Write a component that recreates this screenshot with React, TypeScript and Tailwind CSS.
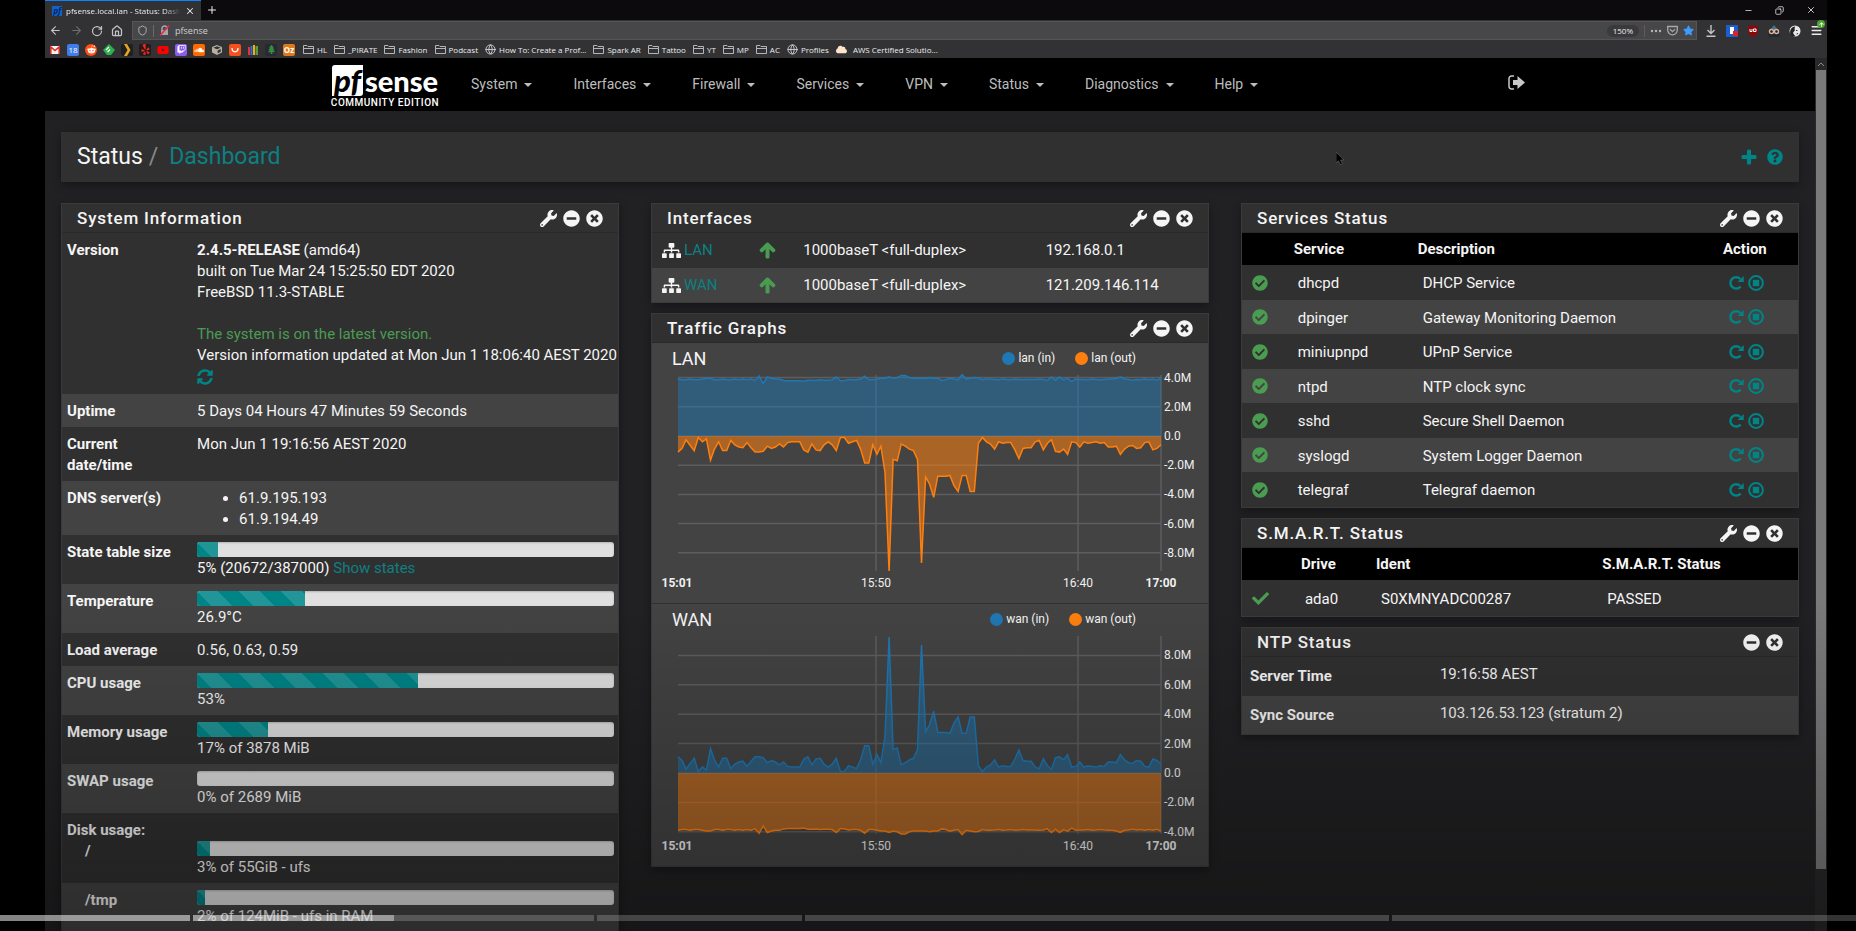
import React from "react";
import {
  FaWrench, FaMinusCircle, FaTimesCircle, FaSitemap, FaArrowUp, FaCheckCircle, FaCheck,
  FaSyncAlt, FaQuestionCircle, FaPlus, FaStar, FaGetPocket, FaRedditAlien, FaYoutube,
  FaTwitch, FaSoundcloud, FaYelp, FaTree, FaCloud, FaCube,
} from "react-icons/fa";
import { ArrowLeft, ArrowRight, RotateCw, House, Shield, Globe, Plus, X, Minus, Copy, Menu, Download } from "lucide-react";

/* ---------- browser chrome ---------- */

const favicon = "flex size-3 shrink-0 items-center justify-center rounded-[2px] text-[8px] leading-none";

const favicons: { name: string; className: string; icon: React.ReactNode }[] = [
  {
    name: "Gmail",
    className: "",
    icon: (
      <svg viewBox="0 0 12 12" className="size-3">
        <path d="M1 2h10v8H1z" fill="#f2f2f2" />
        <path d="M1.800 10V3L6 6.500 10.200 3v7" fill="none" stroke="#d93025" strokeWidth="1.600" />
      </svg>
    ),
  },
  { name: "Calendar", className: "bg-[#3f7de8] text-white", icon: <span>18</span> },
  { name: "Reddit", className: "rounded-full bg-[#ff4f14] text-white", icon: <FaRedditAlien size={9} /> },
  {
    name: "Feedly",
    className: "text-[#2bb24c]",
    icon: (
      <svg viewBox="0 0 12 12" className="size-3">
        <path d="M6 0 12 6 8 11H4L0 6Z" fill="currentColor" />
        <path d="M6 3 3 6M7 5.500 4.600 8" stroke="#fff" strokeWidth="1.200" />
      </svg>
    ),
  },
  {
    name: "Plex",
    className: "bg-[#1f2023]",
    icon: (
      <svg viewBox="0 0 12 12" className="size-3">
        <path d="M3 0h3l3.500 6L6 12H3l3.500-6Z" fill="#e9a51b" />
      </svg>
    ),
  },
  { name: "Reviews", className: "bg-[#241a1c] text-[#f0281e]", icon: <FaYelp size={11} /> },
  { name: "YouTube", className: "text-[#ff0000]", icon: <FaYoutube size={12} /> },
  { name: "Twitch", className: "bg-[#8c5cf0] text-white", icon: <FaTwitch size={9} /> },
  { name: "SoundCloud", className: "bg-[#ff6a00] text-white", icon: <FaSoundcloud size={10} /> },
  { name: "Packages", className: "text-[#b8b0a0]", icon: <FaCube size={10} /> },
  {
    name: "AliExpress",
    className: "bg-[#f4511e]",
    icon: (
      <svg viewBox="0 0 12 12" className="size-3">
        <path d="M3 4c0 5 6 5 6 0" fill="none" stroke="#fff" strokeWidth="1.300" />
      </svg>
    ),
  },
  {
    name: "eBay",
    className: "",
    icon: (
      <svg viewBox="0 0 12 12" className="size-3">
        <path d="M1 3h2v8H1z" fill="#e53238" />
        <path d="M3.500 2h2v9h-2z" fill="#2b6fe0" />
        <path d="M6 1h2v10H6z" fill="#f5af02" />
        <path d="M8.500 2h2.500v9H8.500z" fill="#5a9a3a" />
      </svg>
    ),
  },
  { name: "Forest", className: "bg-[#2b2733] text-[#2f8f3c]", icon: <FaTree size={9} /> },
  { name: "OzBargain", className: "bg-[#dd7a1c] font-bold text-white", icon: <span>Oz</span> },
];

const bookmarks: { label: string; kind: "folder" | "globe" | "cloud" }[] = [
  { label: "HL", kind: "folder" },
  { label: "_PIRATE", kind: "folder" },
  { label: "Fashion", kind: "folder" },
  { label: "Podcast", kind: "folder" },
  { label: "How To: Create a Prof...", kind: "globe" },
  { label: "Spark AR", kind: "folder" },
  { label: "Tattoo", kind: "folder" },
  { label: "YT", kind: "folder" },
  { label: "MP", kind: "folder" },
  { label: "AC", kind: "folder" },
  { label: "Profiles", kind: "globe" },
  { label: "AWS Certified Solutio...", kind: "cloud" },
];

function BookmarkIcon({ kind }: { kind: "folder" | "globe" | "cloud" }) {
  if (kind === "folder") {
    return (
      <svg viewBox="0 0 11 11" className="size-[11px] shrink-0" fill="none" stroke="#b5b5b7">
        <path d="M.5 9.500v-8h3.500l1 1h5.500v7ZM.5 4.500h10" />
      </svg>
    );
  }
  if (kind === "globe") return <Globe size={11} className="shrink-0 text-[#d0d0d2]" />;
  return <FaCloud size={11} className="mr-[3px] shrink-0 text-[#ffe3cb]" />;
}

function BrowserChrome() {
  return (
    <header className="shrink-0 font-['Open_Sans','Noto_Sans',sans-serif] text-[8px] text-[#ececee]">
      <div className="flex h-5 items-center bg-[#0c0a0d]">
        <div className="flex h-5 w-[156px] items-center gap-1 border-t border-[#0a84ff] bg-[#323234] pr-1.5 pl-[7px]">
          <span className="flex size-[10px] shrink-0 items-center justify-center bg-[#1264c0] text-[8px] leading-none font-bold text-[#0b1f6a] italic">pf</span>
          <span className="grow whitespace-nowrap [mask-image:linear-gradient(to_right,#000_85%,transparent)]">
            pfsense.local.lan - Status: Dash
          </span>
          <button aria-label="Close tab"><X size={10} strokeWidth={2.5} /></button>
        </div>
        <button aria-label="New tab" className="ml-[5px]"><Plus size={12} /></button>
        <div className="ml-auto flex items-center gap-[22px] pr-[11px]">
          <button aria-label="Minimize"><Minus size={9} /></button>
          <button aria-label="Restore"><Copy size={9} className="-scale-x-100" /></button>
          <button aria-label="Close"><X size={10} /></button>
        </div>
      </div>

      <div className="flex h-[21px] items-center bg-[#323234] pr-1 pl-1">
        <div className="flex w-[83px] shrink-0 items-center gap-2 text-[#c4c4c6]">
          <button aria-label="Back"><ArrowLeft size={13} /></button>
          <button aria-label="Forward" className="text-[#6d6d70]"><ArrowRight size={13} /></button>
          <button aria-label="Reload"><RotateCw size={12} strokeWidth={2.5} /></button>
          <button aria-label="Home"><House size={12} strokeWidth={2.5} /></button>
        </div>
        <div className="flex h-[19px] grow items-center gap-[5px] border border-[#555558] bg-[#47474a] pr-0.5 pl-1">
          <Shield size={11} className="text-[#b5b5b7]" />
          <span className="h-3 w-px bg-[#6a6a6d]" />
          <svg viewBox="0 0 11 11" className="size-[11px]">
            <path d="M3 5V3.500a2.500 2.500 0 0 1 5 0V5" fill="none" stroke="#a5a5a8" strokeWidth="1.500" />
            <path d="M2 5h7v5H2z" fill="#a5a5a8" />
            <path d="M10 .5 1 10.500" stroke="#e22850" strokeWidth="1.500" />
          </svg>
          <input aria-label="Address" defaultValue="pfsense" className="h-4 w-0 grow bg-transparent text-[9px] text-[#cfcfd1] outline-none" />
          <span className="rounded-full bg-[#3a3a3d] px-1.5 text-[8px] leading-[12px]">150%</span>
          <span className="h-3 w-px bg-[#5d5d60]" />
          <svg viewBox="0 0 12 4" className="h-1 w-3" fill="#b5b5b7">
            <circle cx="2" cy="2" r="1.200" /><circle cx="6" cy="2" r="1.200" /><circle cx="10" cy="2" r="1.200" />
          </svg>
          <svg viewBox="0 0 11 11" className="size-[11px]" fill="none" stroke="#a8a8ab" strokeWidth="1.300">
            <path d="M.7 1.500h9.600V5a4.800 4.800 0 0 1-9.600 0ZM3 4.200l2.500 2.400L8 4.200" />
          </svg>
          <FaStar size={11} className="text-[#3d9bff]" />
        </div>
        <div className="ml-2 flex items-center gap-[9px]">
          <button aria-label="Downloads">
            <svg viewBox="0 0 12 12" className="size-3" fill="none" stroke="#c4c4c6" strokeWidth="1.400">
              <path d="M6 0v8.500M2.500 5 6 8.500 9.500 5M1.500 11.300h9" />
            </svg>
          </button>
          <span className="flex size-3 items-center justify-end bg-[#1a5fd0]">
            <svg viewBox="0 0 12 12" className="size-3">
              <path d="M4 2h4v7H4z" fill="#fff" /><path d="M7 6h5v5H7z" fill="#e0202c" />
            </svg>
          </span>
          <svg viewBox="0 0 12 12" className="size-3">
            <path d="M6 0 11 1.500V6c0 3-2 5-5 6C3 11 1 9 1 6V1.500Z" fill="#8a0a0c" />
            <path d="M3 4v2.500h2V4M6.500 4h2.500v2.500H6.500Z" fill="none" stroke="#fff" />
          </svg>
          <svg viewBox="0 0 12 12" className="size-3">
            <path d="M2 5 6 0l4 5Z" fill="#3a7590" /><path d="M0 9h12l-1 3H1z" fill="#1c2a33" />
            <circle cx="3.500" cy="6.500" r="2" fill="#222" stroke="#e0b09a" strokeWidth="1.400" />
            <circle cx="8.500" cy="6.500" r="2" fill="#222" stroke="#e0b09a" strokeWidth="1.400" />
          </svg>
          <svg viewBox="0 0 12 12" className="size-3">
            <circle cx="6" cy="6" r="5.500" fill="#e8e8e8" />
            <path d="M1.500 10C0 5 3 1 6.500 1.500 4.500 3 7 5 5 6.500s0 3 1.500 4.500c-2 1-4 .5-5-1Z" fill="#222" />
            <path d="M7 5.500h1.500M9 8.500 7.500 9" stroke="#333" />
          </svg>
          <button aria-label="Open menu" className="relative">
            <Menu size={13} strokeWidth={2.5} />
            <span className="absolute -top-1 -right-0.5 flex size-2 items-center justify-center rounded-full bg-[#4fa62c] text-white">
              <FaArrowUp size={5} />
            </span>
          </button>
        </div>
      </div>

      <nav aria-label="Bookmarks" className="flex h-[17px] items-center gap-[6px] bg-[#323234] pl-1">
        {favicons.map((f) => (
          <a key={f.name} href="#" aria-label={f.name} className={`${favicon} ${f.className}`}>{f.icon}</a>
        ))}
        <div className="ml-0.5 flex items-center gap-[7px]">
          {bookmarks.map((b) => (
            <a key={b.label} href="#" className="flex items-center gap-[3px] whitespace-nowrap">
              <BookmarkIcon kind={b.kind} />
              {b.label}
            </a>
          ))}
        </div>
      </nav>
    </header>
  );
}

/* ---------- pfSense page ---------- */

const menu = ["System", "Interfaces", "Firewall", "Services", "VPN", "Status", "Diagnostics", "Help"];

function TopNav() {
  return (
    <nav aria-label="Main" className="flex h-[53px] items-center bg-black">
      <div className="mx-auto flex w-full max-w-[1200px] items-center">
        <a href="#" aria-label="pfSense Community Edition" className="flex w-[110px] flex-col items-center pt-1 font-['Lato',sans-serif]">
          <span className="flex items-center gap-0.5">
            <span className="flex h-[31px] w-[31px] items-center justify-center rounded-tl-[3px] rounded-br-[3px] bg-white text-[31px] leading-[31px] font-black text-black italic">pf</span>
            <span className="text-[29px] leading-[31px] font-black text-white">sense</span>
          </span>
          <span className="mt-px font-['Roboto',sans-serif] text-[10px] leading-[12px] font-medium tracking-wider whitespace-nowrap text-white">COMMUNITY EDITION</span>
        </a>
        <ul className="ml-[31px] flex items-center gap-[41px] text-[14px] text-[#bdbdbd]">
          {menu.map((m) => (
            <li key={m}>
              <button className="flex items-center gap-[7px]">
                {m}
                <svg viewBox="0 0 8 4" className="h-1 w-2"><path d="M0 0h8L4 4Z" fill="currentColor" /></svg>
              </button>
            </li>
          ))}
        </ul>
        <button aria-label="Logout" className="mr-[5px] mb-1 ml-auto text-[#c8c8c8]">
          <svg viewBox="0 0 17 15" className="h-[15px] w-[17px]">
            <path d="M6 1H3.500A2.500 2.500 0 0 0 1 3.500v8A2.500 2.500 0 0 0 3.500 14H6" fill="none" stroke="currentColor" strokeWidth="1.500" />
            <path d="M5 5h4.500V1L17 7.500 9.500 14v-4H5Z" fill="currentColor" />
          </svg>
        </button>
      </div>
    </nav>
  );
}

function Panel({ title, wrench = true, children }: { title: string; wrench?: boolean; children: React.ReactNode }) {
  return (
    <section className="border border-[#3b3a3b] bg-[#313031] shadow-[0_3px_8px_rgba(0,0,0,0.35)]">
      <div className="flex h-[29px] items-center justify-between border-b border-[#2a292a] pr-[15px] pl-[15px]">
        <h2 className="text-[17px] leading-[21px] font-medium tracking-wider">{title}</h2>
        <div className="flex items-center gap-1.5 text-[17px]">
          {wrench && <button aria-label={`Configure ${title}`}><FaWrench /></button>}
          <button aria-label={`Collapse ${title}`}><FaMinusCircle /></button>
          <button aria-label={`Close ${title}`}><FaTimesCircle /></button>
        </div>
      </div>
      {children}
    </section>
  );
}

function Meter({ value, label }: { value: number; label: string }) {
  return (
    <div role="progressbar" aria-label={label} aria-valuenow={value} className="mb-px h-[15px] overflow-hidden rounded-[3px] bg-[#e0e0e0] shadow-[inset_0_1px_2px_rgba(0,0,0,0.2)]">
      <div
        className="h-full bg-[#008587] bg-[linear-gradient(45deg,rgba(255,255,255,0.13)_25%,transparent_25%,transparent_50%,rgba(255,255,255,0.13)_50%,rgba(255,255,255,0.13)_75%,transparent_75%)] bg-[length:42px_42px]"
        style={{ width: `${value}%` }}
      />
    </div>
  );
}

function InfoRow({ label, children }: { label: React.ReactNode; children: React.ReactNode }) {
  return (
    <tr className="align-top even:bg-[#434343]">
      <th scope="row" className="w-[24.3%] pt-[7px] pb-[5px] pl-[5px] text-left font-bold">{label}</th>
      <td className="pt-[7px] pr-1 pb-[5px]">{children}</td>
    </tr>
  );
}

function SystemInformation() {
  return (
    <Panel title="System Information">
      <table className="w-full table-fixed">
        <tbody>
          <InfoRow label="Version">
            <strong>2.4.5-RELEASE</strong> (amd64)<br />
            built on Tue Mar 24 15:25:50 EDT 2020<br />
            FreeBSD 11.3-STABLE<br />
            <br />
            <span className="text-[#4a9c51]">The system is on the latest version.</span><br />
            <span className="whitespace-nowrap">Version information updated at Mon Jun 1 18:06:40 AEST 2020</span>
            <button aria-label="Refresh" className="mb-0.5 flex h-[21px] items-center text-[16px] text-[#008587]"><FaSyncAlt /></button>
          </InfoRow>
          <InfoRow label="Uptime">5 Days 04 Hours 47 Minutes 59 Seconds</InfoRow>
          <InfoRow label={<>Current<br />date/time</>}>Mon Jun 1 19:16:56 AEST 2020</InfoRow>
          <InfoRow label="DNS server(s)">
            <ul className="list-disc pl-[42px]">
              <li>61.9.195.193</li>
              <li>61.9.194.49</li>
            </ul>
          </InfoRow>
          <InfoRow label="State table size">
            <Meter value={5} label="State table size" />
            5% (20672/387000) <a href="#" className="text-[#0c8082]">Show states</a>
          </InfoRow>
          <InfoRow label="Temperature"><Meter value={26} label="Temperature" />26.9°C</InfoRow>
          <InfoRow label="Load average">0.56, 0.63, 0.59</InfoRow>
          <InfoRow label="CPU usage"><Meter value={53} label="CPU usage" />53%</InfoRow>
          <InfoRow label="Memory usage"><Meter value={17} label="Memory usage" />17% of 3878 MiB</InfoRow>
          <InfoRow label="SWAP usage"><Meter value={0} label="SWAP usage" />0% of 2689 MiB</InfoRow>
          <InfoRow label={<>Disk usage:<br /><span className="pl-[18px]">/</span></>}>
            <div className="pt-[21px]"><Meter value={3} label="Disk usage of /" />3% of 55GiB - ufs</div>
          </InfoRow>
          <InfoRow label={<span className="pl-[18px]">/tmp</span>}><Meter value={2} label="Disk usage of /tmp" />2% of 124MiB - ufs in RAM</InfoRow>
        </tbody>
      </table>
    </Panel>
  );
}

const interfaces = [
  { name: "LAN", media: "1000baseT <full-duplex>", ip: "192.168.0.1" },
  { name: "WAN", media: "1000baseT <full-duplex>", ip: "121.209.146.114" },
];

function Interfaces() {
  return (
    <Panel title="Interfaces">
      <table className="w-full table-fixed">
        <tbody>
          {interfaces.map((i) => (
            <tr key={i.name} className="odd:h-[35px] even:h-[34px] even:bg-[#434343]">
              <td className="w-[18.5%] pl-2.5">
                <span className="flex items-center gap-[3px]"><FaSitemap size={19} /><a href="#" className="text-[#0c8082]">{i.name}</a></span>
              </td>
              <td className="w-[8.7%] pl-1 text-[#4a9c51]"><FaArrowUp size={17} stroke="currentColor" strokeWidth={40} role="img" aria-label="up" /></td>
              <td className="w-[43.6%]">{i.media}</td>
              <td>{i.ip}</td>
            </tr>
          ))}
        </tbody>
      </table>
    </Panel>
  );
}

const wanTraffic = [
  1.1, 0.85, 0.25, 0.65, 1.0, 0.1, 0.4, 0.2, 1.65, 0.9, 0.4, 1, 1, 0.3, 0.6, 0.75, 0.8, 0.45, 0.8, 1.1, 1.1, 1.05, 0.7, 0.85,
  0.75, 0.55, 0.75, 0.45, 0.4, 0.4, 0.4, 0.95, 1.1, 0.55, 0.95, 1.0, 0.6, 0.4, 0.6, 1.0, 0.1, 0.1, 0.5, 0.4, 0.3, 0.9, 1.85, 1.85,
  0.6, 1.25, 0.7, 2.5, 9.25, 1.6, 1.7, 0.55, 0.7, 0.9, 1.0, 1.6, 8.7, 2.8, 3.3, 4.2, 2.75, 2.75, 2.75, 2.7, 3.4, 3.8, 2.7, 2.7,
  3.8, 3.8, 0.5, 0.1, 0.4, 0.55, 0.9, 0.4, 0.5, 0.45, 0.45, 0.95, 1.55, 0.85, 0.8, 0.8, 0.4, 0.3, 0.95, 0.5, 0.25, 1.05, 1.1,
  0.9, 1.25, 0.4, 0.45, 0.75, 0.4, 0.5, 0.45, 0.4, 0.5, 0.45, 0.75, 0.75, 0.7, 1.25, 0.9, 0.7, 0.65, 0.85, 0.8, 0.45, 0.4, 0.95,
  0.85, 0.6,
];

const lanTraffic = [
  3.9, 3.85, 3.85, 3.9, 3.85, 3.85, 3.9, 3.95, 3.95, 3.85, 3.85, 3.9, 3.85, 3.85, 3.9, 3.85, 3.9, 3.85, 3.9, 3.8, 4.1, 3.6, 4.05, 3.95,
  3.9, 3.9, 3.8, 3.78, 3.78, 3.78, 3.78, 3.75, 3.82, 3.82, 3.8, 3.85, 3.82, 3.82, 3.85, 4.05, 3.78, 3.8, 3.88, 3.85, 3.85, 3.9, 4.1, 3.85,
  3.85, 3.9, 3.95, 3.95, 4.05, 3.95, 4.0, 4.15, 4.15, 4.0, 3.95, 3.95, 3.95, 3.95, 4.0, 3.95, 3.95, 3.8, 3.85, 3.95, 3.9, 3.85, 4.2, 3.9,
  3.95, 4.0, 3.98, 3.85, 3.9, 3.9, 3.88, 3.85, 3.9, 3.88, 3.85, 3.9, 3.88, 3.85, 3.88, 3.88, 3.88, 3.9, 3.88, 3.8, 4.05, 3.82, 4.05, 3.85,
  3.95, 3.75, 3.9, 3.88, 3.88, 3.85, 3.9, 3.88, 3.85, 3.88, 3.9, 3.9, 3.95, 4.05, 3.9, 3.88, 3.82, 3.88, 3.85, 3.9, 3.85, 3.9, 3.82, 3.95,
];

const LEFT = 26;
const RIGHT = 509;
const TOP = 2;

type Chart = {
  name: string;
  inflow: number[];
  outflow: number[];
  zero: number;
  unit: number;
  bottom: number;
  ticks: number[];
};

function linePoints(data: number[], zero: number, unit: number) {
  return data.map((v, i) => `${(LEFT + ((RIGHT - LEFT) * i) / (data.length - 1)).toFixed(1)},${(zero - v * unit).toFixed(1)}`).join(" ");
}

function TrafficChart({ name, inflow, outflow, zero, unit, bottom, ticks }: Chart) {
  const up = linePoints(inflow, zero, unit);
  const down = linePoints(outflow, zero, -unit);
  const baseline = `${RIGHT},${zero} ${LEFT},${zero}`;
  const key = name.toLowerCase();
  return (
    <div className="border-b border-[#313031] bg-[#434343] last:border-b-0">
      <div className="flex h-[30px] items-center justify-between pr-[72px] pl-5">
        <h3 className="text-[18px]">{name}</h3>
        <div className="flex items-center gap-5 text-[12px]">
          <span className="flex items-center gap-[3px]"><span className="size-[13px] rounded-full bg-[#1f77b4]" />{key} (in)</span>
          <span className="flex items-center gap-[3px]"><span className="size-[13px] rounded-full bg-[#ff7f0e]" />{key} (out)</span>
        </div>
      </div>
      <svg viewBox={`0 0 556 ${bottom + 32}`} className="block w-full overflow-visible" role="img" aria-label={`${name} traffic`}>
        <g stroke="#5e5e60" strokeWidth="1.500">
          {ticks.map((t) => <path key={t} d={`M${LEFT} ${zero - t * unit}H${RIGHT}`} />)}
          <path d={`M224 ${TOP}V${bottom}M426 ${TOP}V${bottom}M${RIGHT} ${TOP}V${bottom}`} />
        </g>
        <polygon points={`${up} ${baseline}`} fill="#1f77b4" fillOpacity="0.5" />
        <polygon points={`${down} ${baseline}`} fill="#ff7f0e" fillOpacity="0.55" />
        <polyline points={up} fill="none" stroke="#1f77b4" strokeWidth="1.500" />
        <polyline points={down} fill="none" stroke="#ff7f0e" strokeWidth="1.500" />
        <g fill="#f0f0f0" fontSize="12">
          {ticks.map((t) => <text key={t} x={RIGHT + 3} y={zero - t * unit + 4}>{t === 0 ? "0.0" : `${t.toFixed(1)}M`}</text>)}
          <g textAnchor="middle">
            <text x={LEFT - 1} y={bottom + 16} fontWeight="700">15:01</text>
            <text x="224" y={bottom + 16}>15:50</text>
            <text x="426" y={bottom + 16}>16:40</text>
            <text x={RIGHT} y={bottom + 16} fontWeight="700">17:00</text>
          </g>
        </g>
      </svg>
    </div>
  );
}

function RestartIcon() {
  return (
    <svg viewBox="0 0 16 16" className="size-4">
      <path d="M12.600 11.400A5.700 5.700 0 1 1 12.300 4" fill="none" stroke="currentColor" strokeWidth="2.400" />
      <path d="M15.700 1v6H9.700Z" fill="currentColor" />
    </svg>
  );
}

function StopIcon() {
  return (
    <svg viewBox="0 0 16 16" className="size-4">
      <circle cx="8" cy="8" r="6.900" fill="none" stroke="currentColor" strokeWidth="2" />
      <path d="M4.800 4.800h6.400v6.400H4.800z" fill="currentColor" />
    </svg>
  );
}

const services = [
  ["dhcpd", "DHCP Service"],
  ["dpinger", "Gateway Monitoring Daemon"],
  ["miniupnpd", "UPnP Service"],
  ["ntpd", "NTP clock sync"],
  ["sshd", "Secure Shell Daemon"],
  ["syslogd", "System Logger Daemon"],
  ["telegraf", "Telegraf daemon"],
];

function ServicesStatus() {
  return (
    <Panel title="Services Status">
      <table className="w-full table-fixed text-left">
        <thead className="bg-black">
          <tr className="h-8">
            <td className="w-[9.3%]" />
            <th scope="col" className="w-[22.3%]">Service</th>
            <th scope="col">Description</th>
            <th scope="col" className="w-[13.5%]">Action</th>
          </tr>
        </thead>
        <tbody>
          {services.map(([name, description]) => (
            <tr key={name} className="odd:h-[35px] even:h-[34px] even:bg-[#434343]">
              <td className="pl-2.5 text-[#4a9c51]"><FaCheckCircle size={16} role="img" aria-label="running" /></td>
              <td className="pt-0.5 pl-1">{name}</td>
              <td className="pt-0.5 pl-[5px]">{description}</td>
              <td className="pl-[5px]">
                <span className="flex items-center gap-1 text-[#008587]">
                  <button aria-label={`Restart ${name}`}><RestartIcon /></button>
                  <button aria-label={`Stop ${name}`}><StopIcon /></button>
                </span>
              </td>
            </tr>
          ))}
        </tbody>
      </table>
    </Panel>
  );
}

function SmartStatus() {
  return (
    <Panel title="S.M.A.R.T. Status">
      <table className="w-full table-fixed text-left">
        <thead className="bg-black">
          <tr className="h-8">
            <td className="w-[10.6%]" />
            <th scope="col" className="w-[13.5%]">Drive</th>
            <th scope="col" className="w-[40.7%]">Ident</th>
            <th scope="col">S.M.A.R.T. Status</th>
          </tr>
        </thead>
        <tbody>
          <tr className="h-9">
            <td className="pl-2.5 text-[#4a9c51]"><FaCheck size={17} role="img" aria-label="passed" /></td>
            <td className="pt-0.5 pl-1">ada0</td>
            <td className="pt-0.5 pl-[5px]">S0XMNYADC00287</td>
            <td className="pt-0.5 pl-[5px]">PASSED</td>
          </tr>
        </tbody>
      </table>
    </Panel>
  );
}

function NtpStatus() {
  return (
    <Panel title="NTP Status" wrench={false}>
      <table className="w-full table-fixed text-left">
        <tbody>
          <tr className="h-[39px]">
            <th scope="row" className="w-[35.6%] pl-2">Server Time</th>
            <td className="pb-1">19:16:58 AEST</td>
          </tr>
          <tr className="h-[38px] bg-[#434343]">
            <th scope="row" className="pl-2">Sync Source</th>
            <td className="pb-1">103.126.53.123 (stratum 2)</td>
          </tr>
        </tbody>
      </table>
    </Panel>
  );
}

/* ---------- video player timeline ---------- */

const chapters = [
  { length: 190, loaded: 100 },
  { length: 401, loaded: 50 },
  { length: 205, loaded: 0 },
  { length: 584, loaded: 0 },
  { length: 464, loaded: 0 },
];

function Timeline() {
  return (
    <div className="pointer-events-none absolute inset-x-0 bottom-0 flex h-[330px] items-end bg-linear-to-b from-transparent to-black/33 pb-2.5">
      <div className="flex w-full gap-[3px]">
        {chapters.map((c, i) => (
          <div key={i} className="h-1.5 basis-0 bg-white/20" style={{ flexGrow: c.length }}>
            <div className="h-full bg-white/40" style={{ width: `${c.loaded}%` }} />
          </div>
        ))}
      </div>
    </div>
  );
}

export default function App() {
  return (
    <div className="relative flex h-screen flex-col overflow-hidden bg-black pr-[29px] pl-[45px] font-['Roboto',sans-serif] text-[15px] leading-[21px] text-[#f5f5f5]">
      <BrowserChrome />
      <div className="flex min-h-0 grow">
        <div className="min-w-0 grow overflow-hidden bg-[#212123]">
          <TopNav />
          <main className="px-4 pt-[21px]">
            <div className="flex h-[50px] items-center justify-between bg-[#313031] px-4 shadow-[0_3px_8px_rgba(0,0,0,0.35)]">
              <h1 className="flex items-center text-[23px] leading-7">
                Status<span className="ml-1.5 text-[#8a8a8a]">/</span>
                <a href="#" className="ml-[11px] text-[#0c8082]">Dashboard</a>
              </h1>
              <div className="flex items-center gap-2.5 text-[16px] text-[#008587]">
                <button aria-label="Add widget"><FaPlus stroke="currentColor" strokeWidth={36} /></button>
                <button aria-label="Help"><FaQuestionCircle /></button>
              </div>
            </div>
            <div className="mt-[21px] grid grid-cols-3 items-start gap-8">
              <SystemInformation />
              <div className="flex flex-col gap-2.5">
                <Interfaces />
                <Panel title="Traffic Graphs">
                  <TrafficChart name="LAN" inflow={lanTraffic} outflow={wanTraffic} zero={63} unit={14.6} bottom={198} ticks={[4, 2, 0, -2, -4, -6, -8]} />
                  <TrafficChart name="WAN" inflow={wanTraffic} outflow={lanTraffic} zero={139} unit={14.7} bottom={200} ticks={[8, 6, 4, 2, 0, -2, -4]} />
                </Panel>
              </div>
              <div className="flex flex-col gap-2.5">
                <ServicesStatus />
                <SmartStatus />
                <NtpStatus />
              </div>
            </div>
          </main>
        </div>
        <div className="flex w-3 shrink-0 flex-col items-center bg-[#29292b] pt-1">
          <svg viewBox="0 0 6 4" className="h-1 w-1.5"><path d="M0 4 3 1l3 3" fill="none" stroke="#8a8a8a" /></svg>
          <div className="mt-1 h-[92%] w-[10px] bg-[#7a7a7b]" />
        </div>
      </div>
      <Timeline />
      <svg viewBox="0 0 10 14" className="pointer-events-none absolute top-[152px] left-[72%] h-3.5 w-2.5">
        <path d="M0 0v11l2.500-2.200L4.500 13l2-1-2-4H8Z" fill="#000" stroke="#666" strokeWidth=".6" />
      </svg>
    </div>
  );
}
